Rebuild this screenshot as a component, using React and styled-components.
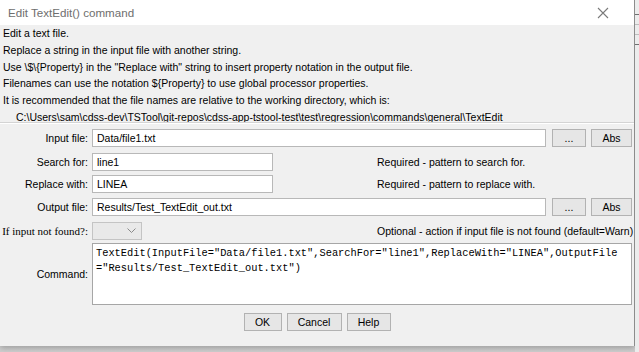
import React from "react";
import styled, { createGlobalStyle } from "styled-components";

const GlobalStyle = createGlobalStyle`
body{
  margin:0;
  background:#d9d9d9;
  font-family:"Liberation Sans", Arial, sans-serif;
}
`
const Screen = styled.div`
width:639px;
height:352px;
display:flex;
overflow:hidden;
background:linear-gradient(#e2e2e2, #cfcfcf);
`
const Dialog = styled.div`
width:634px;
height:346px;
background:#f0f0f0;
border-right:1px solid #8c8c8c;
box-shadow:0 2px 6px rgba(0,0,0,0.25);
display:flex;
flex-direction:column;
`
const Backdrop = styled.div`
flex:1;
background:#ececec;
display:flex;
flex-direction:column;
gap:9px;
padding-top:14px;
`
const BackLine = styled.div`
height:1px;
background:${p => p.$dark ? "#707070" : "#bdbdbd"};
`
const TitleBar = styled.div`
height:25px;
flex:none;
background:#fff;
display:flex;
align-items:center;
justify-content:space-between;
padding:0 0 0 8px;
`
const Title = styled.div`
font-family:"Segoe UI","Liberation Sans",Arial,sans-serif;
font-size:11.6px;
color:#6e6e6e;
`
const Close = styled.div`
width:46px;
display:flex;
justify-content:center;
align-items:center;
margin-right:8px;
`
const Info = styled.div`
padding:0 0 0 3px;
font-size:10.5px;
line-height:16.8px;
color:#000;
`
const InfoLine = styled.div`
padding-left:${p => p.$indent ? "13px" : "0"};
`
const Separator = styled.div`
margin-top:-4px;
border-top:1px solid #d4d4d4;
border-bottom:1px solid #fff;
`
const Form = styled.div`
display:flex;
flex-direction:column;
padding-right:2px;
`
const Row = styled.div`
display:flex;
align-items:center;
margin-top:${p => p.$mt}px;
font-size:10.5px;
`
const Label = styled.div`
width:88px;
display:flex;
justify-content:flex-end;
padding-right:4px;
flex:none;
font-family:${p => p.$serif ? '"Liberation Serif","Times New Roman",serif' : "inherit"};
font-size:${p => p.$serif ? "11px" : "10.5px"};
white-space:nowrap;
`
const Field = styled.div`
height:18px;
box-sizing:border-box;
width:${p => p.$w ? p.$w + "px" : "auto"};
flex:${p => p.$w ? "none" : "1"};
border:1px solid #b8b8b8;
background:#fff;
padding:0 4px;
display:flex;
align-items:center;
font-size:10.5px;
`
const Btn = styled.div`
height:18px;
box-sizing:border-box;
width:${p => p.$w}px;
margin-left:${p => p.$ml || 0}px;
flex:none;
border:1px solid #b2b2b2;
background:#e6e6e6;
display:flex;
align-items:center;
justify-content:center;
font-size:10.5px;
`
const Note = styled.div`
margin-left:${p => p.$ml}px;
white-space:nowrap;
`
const Combo = styled.div`
width:50px;
height:18px;
box-sizing:border-box;
border:1px solid #c4c4c4;
background:#e9e9e9;
display:flex;
align-items:center;
justify-content:flex-end;
padding-right:5px;
flex:none;
`
const CommandBox = styled.div`
flex:1;
height:62px;
box-sizing:border-box;
border:1px solid #a6a6a6;
background:#fff;
padding:2px 2px 0 3px;
font-family:"Liberation Mono","Courier New",monospace;
font-size:10.35px;
line-height:15px;
word-break:break-all;
color:#000;
`
const Buttons = styled.div`
display:flex;
justify-content:center;
gap:5px;
margin-top:8px;
`

export default function App() {
  return (
    <>
      <GlobalStyle />
      <Screen>
        <Dialog>
          <TitleBar>
            <Title>Edit TextEdit() command</Title>
            <Close>
              <svg width="12" height="12" viewBox="0 0 12 12">
                <path d="M1 1L11 11M11 1L1 11" stroke="#7a7a7a" strokeWidth="1.1" />
              </svg>
            </Close>
          </TitleBar>
          <Info>
            <InfoLine>Edit a text file.</InfoLine>
            <InfoLine>Replace a string in the input file with another string.</InfoLine>
            <InfoLine>Use \$\{"{"}Property{"}"} in the "Replace with" string to insert property notation in the output file.</InfoLine>
            <InfoLine>Filenames can use the notation ${"{"}Property{"}"} to use global processor properties.</InfoLine>
            <InfoLine>It is recommended that the file names are relative to the working directory, which is:</InfoLine>
            <InfoLine $indent>C:\Users\sam\cdss-dev\TSTool\git-repos\cdss-app-tstool-test\test\regression\commands\general\TextEdit</InfoLine>
          </Info>
          <Separator />
          <Form>
            <Row $mt={5}>
              <Label>Input file:</Label>
              <Field>Data/file1.txt</Field>
              <Btn $w={34} $ml={6}>...</Btn>
              <Btn $w={41} $ml={5}>Abs</Btn>
            </Row>
            <Row $mt={6}>
              <Label>Search for:</Label>
              <Field $w={181}>line1</Field>
              <Note $ml={104}>Required - pattern to search for.</Note>
            </Row>
            <Row $mt={4}>
              <Label>Replace with:</Label>
              <Field $w={181}>LINEA</Field>
              <Note $ml={104}>Required - pattern to replace with.</Note>
            </Row>
            <Row $mt={5}>
              <Label>Output file:</Label>
              <Field>Results/Test_TextEdit_out.txt</Field>
              <Btn $w={34} $ml={6}>...</Btn>
              <Btn $w={41} $ml={5}>Abs</Btn>
            </Row>
            <Row $mt={6}>
              <Label $serif>If input not found?:</Label>
              <Combo>
                <svg width="9" height="5" viewBox="0 0 9 5">
                  <path d="M0.5 0.5L4.5 4.5L8.5 0.5" stroke="#8a8a8a" fill="none" strokeWidth="1" />
                </svg>
              </Combo>
              <Note $ml={235}>Optional - action if input file is not found (default=Warn)</Note>
            </Row>
            <Row $mt={3}>
              <Label>Command:</Label>
              <CommandBox>TextEdit(InputFile="Data/file1.txt",SearchFor="line1",ReplaceWith="LINEA",OutputFile="Results/Test_TextEdit_out.txt")</CommandBox>
            </Row>
          </Form>
          <Buttons>
            <Btn $w={38}>OK</Btn>
            <Btn $w={55}>Cancel</Btn>
            <Btn $w={44}>Help</Btn>
          </Buttons>
        </Dialog>
        <Backdrop>
          <BackLine $dark />
          <BackLine />
          <BackLine />
          <BackLine $dark />
        </Backdrop>
      </Screen>
    </>
  );
}
